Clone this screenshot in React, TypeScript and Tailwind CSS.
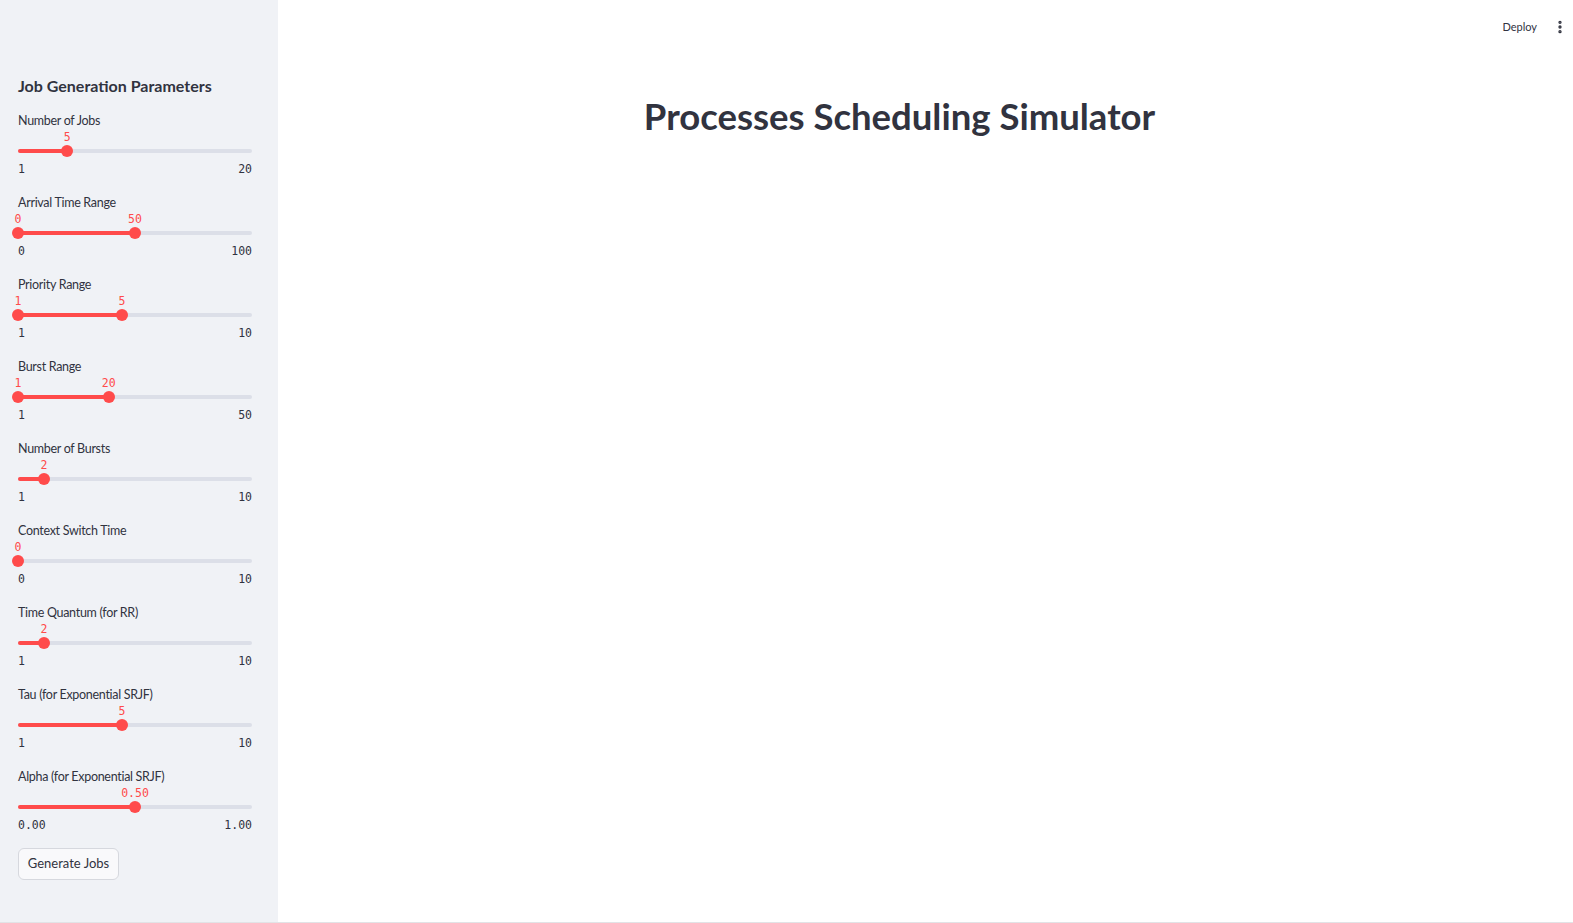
import { EllipsisVertical } from "lucide-react";

type SliderDef = {
  label: string;
  min: number;
  max: number;
  values: number[];
  decimals?: number;
};

const SLIDERS: SliderDef[] = [
  { label: "Number of Jobs", min: 1, max: 20, values: [5] },
  { label: "Arrival Time Range", min: 0, max: 100, values: [0, 50] },
  { label: "Priority Range", min: 1, max: 10, values: [1, 5] },
  { label: "Burst Range", min: 1, max: 50, values: [1, 20] },
  { label: "Number of Bursts", min: 1, max: 10, values: [2] },
  { label: "Context Switch Time", min: 0, max: 10, values: [0] },
  { label: "Time Quantum (for RR)", min: 1, max: 10, values: [2] },
  { label: "Tau (for Exponential SRJF)", min: 1, max: 10, values: [5] },
  { label: "Alpha (for Exponential SRJF)", min: 0, max: 1, values: [0.5], decimals: 2 },
];

const SANS = "font-['Lato','Noto_Sans',sans-serif]";
const MONO = "font-['DejaVu_Sans_Mono','Liberation_Mono',monospace]";

function fmt(v: number, decimals?: number): string {
  return decimals ? v.toFixed(decimals) : String(v);
}

function Slider({ s }: { s: SliderDef }) {
  const pct = (v: number) => ((v - s.min) / (s.max - s.min)) * 100;
  const lo = s.values.length > 1 ? pct(s.values[0]) : 0;
  const hi = pct(s.values[s.values.length - 1]);

  return (
    <div className="h-[82px]">
      <div className={`${SANS} text-[12.5px] leading-[20px] tracking-[-0.3px] text-[#31333f]`}>{s.label}</div>

      {/* track with value labels above the thumbs */}
      <div className="relative -mt-[1px] h-[28px] w-[234px]">
        {s.values.map((v, i) => (
          <span
            key={i}
            className={`${MONO} absolute top-0 -translate-x-1/2 text-[11.5px] leading-[14px] text-[#ff4b4b]`}
            style={{ left: `${pct(v)}%` }}
          >
            {fmt(v, s.decimals)}
          </span>
        ))}
        <div className="absolute left-0 right-0 top-[19px] h-[4px] rounded-full bg-[#dcdfe8]" />
        <div
          className="absolute top-[19px] h-[4px] rounded-full bg-[#ff4b4b]"
          style={{ left: `${lo}%`, width: `${hi - lo}%` }}
        />
        {s.values.map((v, i) => (
          <span
            key={i}
            className="absolute top-[15px] h-[12px] w-[12px] -translate-x-1/2 rounded-full bg-[#ff4b4b]"
            style={{ left: `${pct(v)}%` }}
          />
        ))}
      </div>

      <div className={`${MONO} mt-[3px] flex w-[234px] justify-between text-[11.5px] leading-[16px] text-[#31333f]`}>
        <span>{fmt(s.min, s.decimals)}</span>
        <span>{fmt(s.max, s.decimals)}</span>
      </div>
    </div>
  );
}

export default function App() {
  return (
    <div className={`${SANS} flex h-[923px] w-full flex-col bg-white text-[#31333f]`}>
      <div className="flex flex-1">
        {/* Sidebar */}
        <aside className="w-[278px] shrink-0 bg-[#f0f2f6] pl-[18px] pt-[75px]">
          <h2 className={`${SANS} text-[16px] font-bold leading-[22px] text-[#31333f]`}>
            Job Generation Parameters
          </h2>
          <div className="mt-[14px] flex flex-col">
            {SLIDERS.map((s) => (
              <Slider key={s.label} s={s} />
            ))}
          </div>
          <button className="mt-[-1px] h-[32px] w-[101px] rounded-[6px] border border-[#d6d8de] bg-[#f9f9fb] text-[13px] text-[#31333f]">
            Generate Jobs
          </button>
        </aside>

        {/* Main */}
        <main className="flex flex-1 flex-col">
          <header className="flex h-[54px] items-center justify-end gap-[15px] pr-[5px]">
            <span className={`${SANS} text-[11px] text-[#31333f]`}>Deploy</span>
            <EllipsisVertical className="h-[16px] w-[16px] text-[#31333f]" strokeWidth={3} />
          </header>
          <div className="flex justify-center pr-[52px] pt-[40px]">
            <h1 className="font-['Lato','Noto_Sans',sans-serif] text-[36.5px] font-bold leading-[44px] text-[#31333f]">
              Processes Scheduling Simulator
            </h1>
          </div>
        </main>
      </div>
      <div className="h-[1px] w-full bg-[#e2e3e6]" />
    </div>
  );
}
